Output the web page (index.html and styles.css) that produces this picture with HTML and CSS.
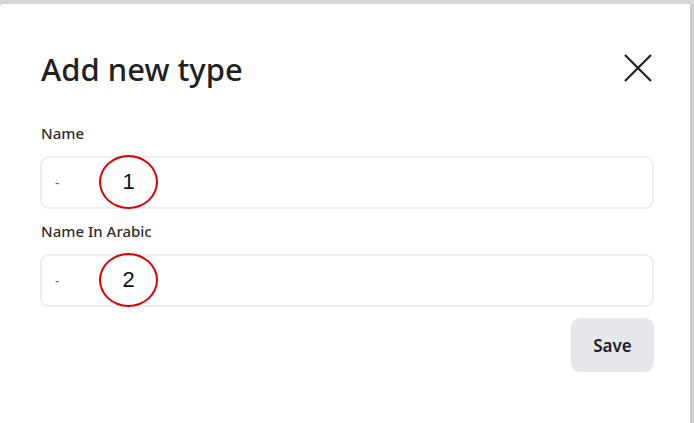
FILE: index.html
```html
<!DOCTYPE html>
<html>
<head>
<meta charset="utf-8">
<link rel="stylesheet" href="styles.css">
</head>
<body>
<div class="backdrop">
  <div class="topstrip"></div>
  <div class="modal">
    <div class="header">
      <h1 class="title">Add new type</h1>
      <button class="close" aria-label="Close">
        <svg width="30" height="30" viewBox="0 0 30 30"><path d="M2 2 L28 28 M28 2 L2 28" stroke="#222" stroke-width="2.2" fill="none"/></svg>
      </button>
    </div>
    <div class="field">
      <label class="label">Name</label>
      <div class="input"><span class="ph">-</span><span class="mark">1</span></div>
    </div>
    <div class="field">
      <label class="label">Name In Arabic</label>
      <div class="input"><span class="ph">-</span><span class="mark">2</span></div>
    </div>
    <div class="actions">
      <button class="save">Save</button>
    </div>
  </div>
</div>
</body>
</html>
```
FILE: styles.css
```css
html, body { margin: 0; padding: 0; }
body { width: 694px; height: 423px; overflow: hidden; background: #cfcfcf; font-family: "Noto Sans", "Open Sans", sans-serif; }
.backdrop { display: flex; flex-direction: column; height: 423px; }
.topstrip { height: 4px; background: #d6d6d6; }
.modal {
  flex: 1;
  width: 691px;
  background: #fff;
  border-right: 1px solid #c8c8c8;
  border-top-left-radius: 3px;
  box-sizing: border-box;
  padding: 0 40px 0 40px;
}
.header { display: flex; justify-content: space-between; align-items: flex-start; height: 119px; box-sizing: border-box; padding-top: 44px; }
.title { margin: 0 0 0 1px; font-size: 31px; line-height: 42px; font-weight: 500; color: #222; }
.close { border: 0; background: none; padding: 0; margin: 5px -3px 0 0; width: 30px; height: 30px; }
.close svg { display: block; }
.field { display: flex; flex-direction: column; margin-bottom: 12px; }
.label { font-size: 15px; font-weight: 500; color: #2e2e2e; margin: 0 0 13px 1px; line-height: 20px; }
.input {
  height: 53px;
  border: 2px solid #eceef1;
  border-radius: 9px;
  box-sizing: border-box;
  display: flex;
  align-items: center;
  position: relative;
  width: 614px;
}
.ph { margin-left: 13px; color: #6b6b7a; font-size: 14px; }
.mark {
  position: absolute;
  left: 57px;
  top: -3px;
  width: 59px;
  height: 54px;
  border: 2px solid #e00000;
  border-radius: 50%;
  box-sizing: border-box;
  display: flex;
  align-items: center;
  justify-content: center;
  font-family: "Liberation Sans", "DejaVu Sans", sans-serif;
  font-size: 22px;
  color: #111;
}
.actions { display: flex; justify-content: flex-end; margin-top: -1px; width: 614px; }
.save {
  width: 83px;
  height: 54px;
  border: 0;
  border-radius: 9px;
  background: #e5e7eb;
  font-family: "Noto Sans", sans-serif;
  font-size: 17px;
  font-weight: 600;
  color: #1f1f2a;
}
```
